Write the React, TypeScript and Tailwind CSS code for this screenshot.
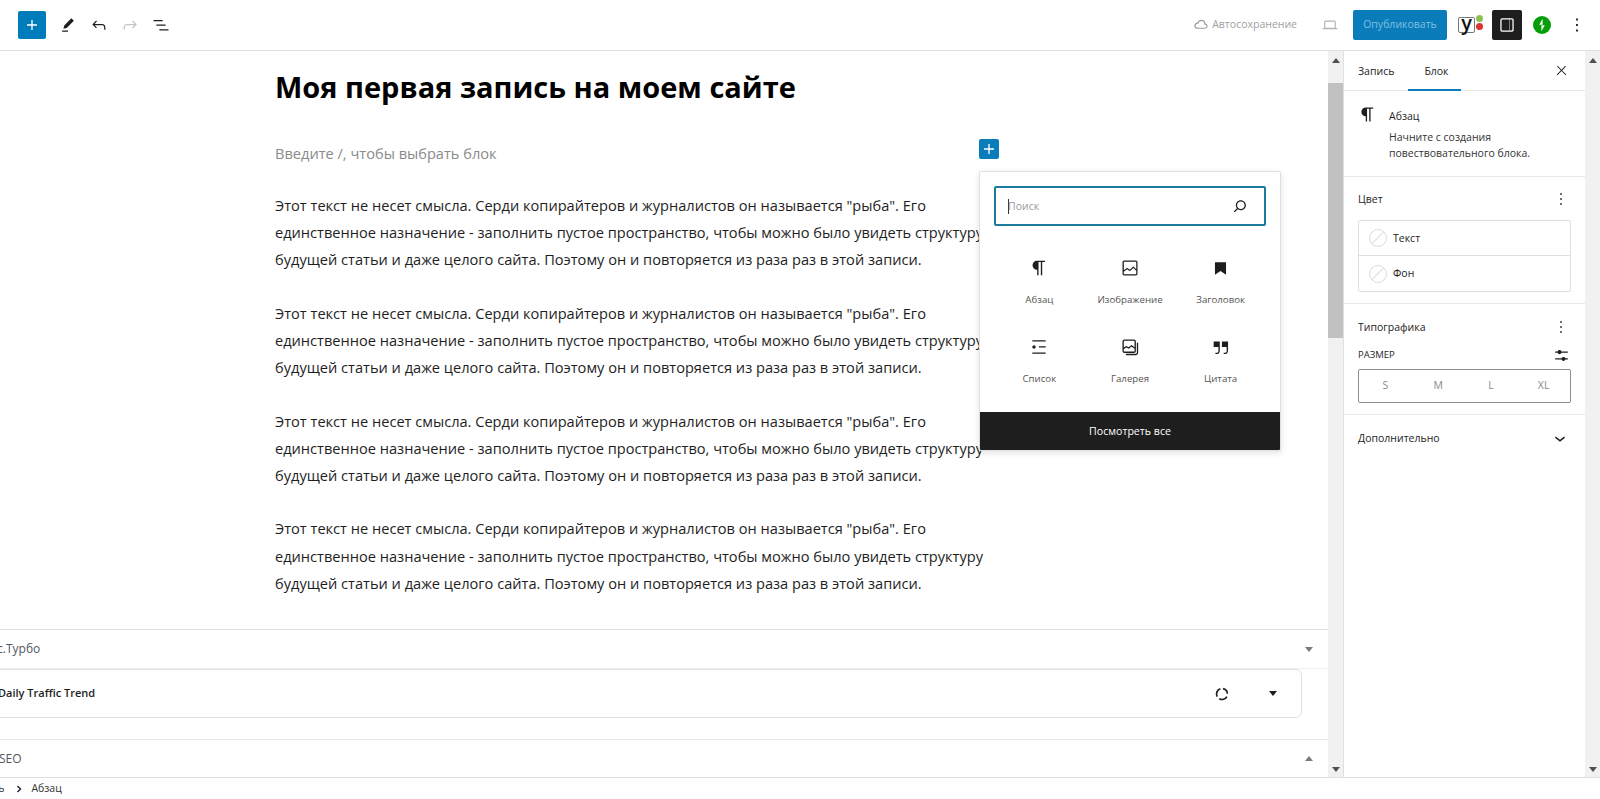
import React from "react";

const P = {
  plus: "M18 11.2h-5.2V6h-1.6v5.2H6v1.6h5.2V18h1.6v-5.2H18z",
  pencil: "m19 7-3-3-8.5 8.5-1 4 4-1L19 7Zm-7 11.5H5V20h7v-1.5Z",
  undo: "M18.3 11.7c-.6-.6-1.4-.9-2.3-.9H6.7l2.9-3.3-1.1-1-4.5 5L8.5 16l1-1-2.7-2.7H16c.5 0 .9.2 1.3.5 1 1 1 3.4 1 4.5v.3h1.5v-.2c0-1.5 0-4.3-1.5-5.7z",
  redo: "M15.6 6.5l-1.1 1 2.9 3.3H8c-.9 0-1.7.3-2.3.9-1.4 1.5-1.4 4.2-1.4 5.6v.2h1.5v-.3c0-1.1 0-3.5 1-4.5.3-.3.7-.5 1.3-.5h9.2L14.5 15l1.1 1.1 4.6-4.6-4.6-5z",
  listView: "M3 6h11v1.5H3V6Zm3.5 5.5h11V13h-11v-1.5ZM21 17H10v1.5h11V17Z",
  paragraph: "m9.99609 14v-.2251l.00391.0001v6.225h1.5v-14.5h2.5v14.5h1.5v-14.5h3v-1.5h-8.50391c-2.76142 0-5 2.23858-5 5 0 2.7614 2.23858 5 5 5z",
  image: "M19 3H5c-1.1 0-2 .9-2 2v14c0 1.1.9 2 2 2h14c1.1 0 2-.9 2-2V5c0-1.1-.9-2-2-2zM5 4.5h14c.3 0 .5.2.5.5v8.4l-3-2.9c-.3-.3-.8-.3-1 0L11.9 14 9 12c-.3-.2-.6-.2-.8 0l-3.6 2.6V5c-.1-.3.1-.5.4-.5zm14 15H5c-.3 0-.5-.2-.5-.5v-2.4l4.1-3 3 1.9c.3.2.7.2.9-.1L16 12l3.5 3.4V19c0 .3-.2.5-.5.5z",
  bookmark: "M5 4h14v16l-7-5-7 5z",
  list: "M4 4v1.5h16V4H4zm8 8.5h8V11h-8v1.5zM4 20h16v-1.5H4V20zm4-8c0-1.1-.9-2-2-2s-2 .9-2 2 .9 2 2 2 2-.9 2-2z",
  quote: "M13 6v6h5.2v4c0 .8-.2 1.4-.5 1.7-.6.6-1.6.6-2.5.5h-.3v1.5h.5c1 0 2.3-.1 3.3-1 .6-.6 1-1.6 1-2.8V6H13zm-9 6h5.2v4c0 .8-.2 1.4-.5 1.7-.6.6-1.6.6-2.5.5h-.3v1.5h.5c1 0 2.3-.1 3.3-1 .6-.6 1-1.6 1-2.8V6H4v6z",
  search: "M13 5c-3.3 0-6 2.7-6 6 0 1.4.5 2.7 1.3 3.7l-3.8 3.8 1.1 1.1 3.8-3.8c1 .8 2.3 1.3 3.7 1.3 3.3 0 6-2.7 6-6S16.3 5 13 5zm0 10.5c-2.5 0-4.5-2-4.5-4.5s2-4.5 4.5-4.5 4.5 2 4.5 4.5-2 4.5-4.5 4.5z",
  more: "M13 19h-2v-2h2v2zm0-6h-2v-2h2v2zm0-6h-2V5h2v2z",
  close: "m13 11.8 6.1-6.3-1-1-6.1 6.2-6.1-6.3-1 1 6.1 6.3-6.5 6.7 1 1 6.5-6.6 6.5 6.6 1-1z",
  chevron: "M17.5 11.6L12 16l-5.5-4.4.9-1.2L12 14l4.5-3.6 1 1.2z",
  sliders: "M14.5 13.8c-1.1 0-2.1.7-2.4 1.8H4V17h8.1c.3 1 1.3 1.8 2.4 1.8s2.1-.7 2.4-1.8H20v-1.5h-3.1c-.3-1-1.3-1.7-2.4-1.7zM11.9 7c-.3-1-1.3-1.8-2.4-1.8S7.4 6 7.1 7H4v1.5h3.1c.3 1 1.3 1.8 2.4 1.8s2.1-.7 2.4-1.8H20V7h-8.1z",
  drawer: "M18 4H6c-1.1 0-2 .9-2 2v12c0 1.1.9 2 2 2h12c1.1 0 2-.9 2-2V6c0-1.1-.9-2-2-2zm-4 14.5H6c-.3 0-.5-.2-.5-.5V6c0-.3.2-.5.5-.5h8.5v13zm4-.5c0 .3-.2.5-.5.5h-2.5v-13H18c.3 0 .5.2.5.5v12z",
  desktop: "M20.5 16h-.7V8c0-1.1-.9-2-2-2H6.2c-1.1 0-2 .9-2 2v8h-.7c-.8 0-1.5.7-1.5 1.5h20c0-.8-.7-1.5-1.5-1.5zM5.7 8c0-.3.2-.5.5-.5h11.6c.3 0 .5.2.5.5v7.6H5.7V8z",
  cloud: "M17.3 10.1c0-2.5-2.1-4.4-4.8-4.4-2.2 0-4.1 1.4-4.6 3.3h-.2C5.7 9 4 10.7 4 12.8c0 2.1 1.7 3.8 3.7 3.8h9c1.8 0 3.2-1.5 3.2-3.3.1-1.6-1.1-2.9-2.6-3.2zm-.5 5.1h-9c-1.2 0-2.2-1.1-2.2-2.3s1-2.4 2.2-2.4h1.3l.3-1.1c.4-1.3 1.7-2.2 3.2-2.2 1.8 0 3.3 1.3 3.3 2.9v1.3l1.3.2c.8.1 1.4.9 1.4 1.8-.1 1-.9 1.8-1.8 1.8z",
};

function Icon({ d, size = 20, className = "" }: { d: string; size?: number; className?: string }) {
  return (
    <svg width={size} height={size} viewBox="0 0 24 24" fill="currentColor" className={`shrink-0 ${className}`}>
      <path d={d} />
    </svg>
  );
}

function Gallery() {
  return (
    <svg width="20" height="20" viewBox="0 0 24 24" fill="none" stroke="currentColor" strokeWidth="1.6" className="shrink-0">
      <rect x="3.75" y="3.75" width="14.5" height="14.5" rx="1.5" />
      <path d="M4 14l3.5-2.4 3 1.6 3.4-2.6 4 3" />
      <path d="M21 7v12a2 2 0 0 1-2 2H7" />
    </svg>
  );
}

function Spinner() {
  return (
    <svg width="14" height="14" viewBox="0 0 14 14" fill="none" stroke="#1e1e1e" strokeWidth="1.7" className="shrink-0">
      <path d="M2.2 9.6A5.4 5.4 0 0 1 5.4 1.8" />
      <path d="M8 1.7a5.4 5.4 0 0 1 4.4 5" />
      <path d="M11.9 9.6a5.4 5.4 0 0 1-7.6 2.1" />
    </svg>
  );
}

function Tri({ up = false, className = "" }: { up?: boolean; className?: string }) {
  return (
    <span
      className={`block w-0 h-0 border-l-[4px] border-r-[4px] border-l-transparent border-r-transparent ${
        up ? "border-b-[5px] border-b-current" : "border-t-[5px] border-t-current"
      } ${className}`}
    />
  );
}

function Scrollbar({ thumb = false }: { thumb?: boolean }) {
  return (
    <div className="w-[15px] shrink-0 bg-[#f1f1f1] flex flex-col items-center text-[#505050]">
      <div className="h-[15px] w-full flex items-center justify-center pt-[3px]">
        <Tri up />
      </div>
      {thumb && <div className="mt-[17px] h-[255px] w-full bg-[#c1c1c1]" />}
      <div className="mt-auto h-[15px] w-full flex items-center justify-center">
        <Tri />
      </div>
    </div>
  );
}

const BODY =
  'Этот текст не несет смысла. Серди копирайтеров и журналистов он называется "рыба". Его единственное назначение - заполнить пустое пространство, чтобы можно было увидеть структуру будущей статьи и даже целого сайта. Поэтому он и повторяется из раза раз в этой записи.';

const BLOCKS = [
  { label: "Абзац", icon: <Icon d={P.paragraph} size={22} /> },
  { label: "Изображение", icon: <Icon d={P.image} /> },
  { label: "Заголовок", icon: <Icon d={P.bookmark} size={19} /> },
  { label: "Список", icon: <Icon d={P.list} /> },
  { label: "Галерея", icon: <Gallery /> },
  { label: "Цитата", icon: <Icon d={P.quote} size={22} /> },
];

function NoColor() {
  return (
    <span className="relative w-[18px] h-[18px] rounded-full border border-[#dcdcdc] overflow-hidden shrink-0">
      <span className="absolute left-[-2px] top-[7px] w-[20px] h-px bg-[#dcdcdc] -rotate-45" />
    </span>
  );
}

export default function App() {
  return (
    <div className="w-[1600px] h-[799px] flex flex-col overflow-hidden bg-white text-[#1e1e1e] font-['Open_Sans','Noto_Sans',sans-serif]">
      {/* Top toolbar */}
      <header className="h-[51px] shrink-0 border-b border-[#e0e0e0] flex items-center pl-[18px]">
        <button className="w-[28px] h-[28px] rounded-[2px] bg-[#007cba] text-white flex items-center justify-center">
          <Icon d={P.plus} />
        </button>
        <div className="ml-[12px] flex items-center gap-[11px]">
          <Icon d={P.pencil} />
          <Icon d={P.undo} />
          <Icon d={P.redo} className="text-[#c4c4c4]" />
          <Icon d={P.listView} />
        </div>
        <div className="ml-auto flex items-center text-[10.5px] text-[#a0a0a0]">
          <Icon d={P.cloud} size={20} className="text-[#9a9a9a]" />
          <span className="ml-[1px]">Автосохранение</span>
        </div>
        <Icon d={P.desktop} size={18} className="ml-[24px] text-[#b4b4b4]" />
        <button className="ml-[14px] w-[94px] h-[30px] rounded-[2px] bg-[#0a7cba] text-[#7fbfe2] text-[10.5px] flex items-center justify-center">
          Опубликовать
        </button>
        <div className="ml-[11px] w-[25px] h-[24px] flex items-center relative">
          <span className="w-[17px] h-[16px] border border-[#777] rounded-[2px] flex items-center justify-center text-[20px] font-semibold leading-none text-[#111] pb-[5px]">
            y
          </span>
          <span className="absolute right-0 top-[2px] w-[7px] h-[7px] rounded-full bg-[#8cc152]" />
          <span className="absolute right-0 top-[10px] w-[7px] h-[7px] rounded-full bg-[#dc3232]" />
        </div>
        <button className="ml-[9px] w-[30px] h-[30px] rounded-[2px] bg-[#1e1e1e] text-white flex items-center justify-center">
          <Icon d={P.drawer} size={20} />
        </button>
        <svg width="18" height="18" viewBox="0 0 18 18" className="ml-[11px] shrink-0">
          <circle cx="9" cy="9" r="9" fill="#069e08" />
          <path d="M9.6 2.8v6H6.2zM8.4 15.2v-6h3.4z" fill="#fff" />
        </svg>
        <Icon d={P.more} size={22} className="ml-[15px] mr-[12px]" />
      </header>

      <div className="flex-1 min-h-0 flex">
        {/* Editor column */}
        <main className="flex-1 min-w-0 flex">
          <div className="relative flex-1 min-w-0 flex flex-col overflow-hidden">
            <section className="h-[578px] shrink-0 pl-[275px]">
              <h1 className="mt-[16px] text-[29px] leading-[40px] font-bold text-black">Моя первая запись на моем сайте</h1>
              <p className="mt-[33px] text-[14.6px] leading-[27px] text-[#8a8a8a]">Введите /, чтобы выбрать блок</p>
              <div className="mt-[25px] w-[712px] flex flex-col gap-[26.2px]">
                {[0, 1, 2, 3].map((i) => (
                  <p key={i} className="text-[14.6px] leading-[27.2px]">
                    {BODY}
                  </p>
                ))}
              </div>
            </section>

            {/* Meta boxes, scrolled slightly sideways */}
            <section className="flex-1 border-t border-[#e0e0e0] text-[12px] overflow-hidden">
              <div className="h-[39px] border-b border-[#f0f0f0] flex items-center justify-between pr-[15px] font-medium text-[#50575e] -ml-[38px]">
                <span>Яндекс.Турбо</span>
                <Tri className="text-[#787c82]" />
              </div>
              <div className="h-[49px] mr-[26px] -ml-[20px] pl-[17px] border border-[#e0e0e0] rounded-[6px] flex items-center font-semibold text-[11px]">
                <span>Daily Traffic Trend</span>
                <span className="ml-auto mr-[24px] flex items-center gap-[40px]">
                  <Spinner />
                  <Tri className="text-[#1e1e1e]" />
                </span>
              </div>
              <div className="mt-[21px] h-[38px] border-t border-[#e8e8e8] flex items-center justify-between pr-[15px] font-medium text-[#50575e] text-[12px]">
                <span className="-ml-[1px]">SEO</span>
                <Tri up className="text-[#787c82]" />
              </div>
            </section>

            {/* Block inserter */}
            <button className="absolute left-[979px] top-[88px] w-[20px] h-[20px] rounded-[2px] bg-[#0a7cba] text-white flex items-center justify-center">
              <Icon d={P.plus} size={20} />
            </button>
            <div className="absolute left-[979px] top-[120px] w-[302px] h-[280px] bg-white border border-[#e0e0e0] rounded-[2px] shadow-[0_2px_6px_rgba(0,0,0,0.12)] flex flex-col overflow-hidden">
              <div className="mt-[14px] mx-[14px] h-[40px] shrink-0 border-2 border-[#1c7a9c] rounded-[2px] flex items-center pl-[12px] pr-[14px] text-[10.5px] text-[#9a9a9a]">
                <span className="w-px h-[15px] bg-[#333]" />
                <span className="-ml-[1px] pt-[2px]">Поиск</span>
                <Icon d={P.search} size={20} className="ml-auto text-[#1e1e1e]" />
              </div>
              <div className="mt-[31px] mx-[14px] grid grid-cols-3 gap-y-[29px]">
                {BLOCKS.map((b) => (
                  <div key={b.label} className="flex flex-col items-center">
                    <div className="h-[22px] flex items-center justify-center">{b.icon}</div>
                    <span className="mt-[14px] text-[9.7px] leading-[14px] text-[#555]">{b.label}</span>
                  </div>
                ))}
              </div>
              <div className="mt-auto h-[38px] shrink-0 bg-[#1e1e1e] text-white text-[10.6px] font-medium flex items-center justify-center pt-[2px]">
                Посмотреть все
              </div>
            </div>
          </div>
          <Scrollbar thumb />
        </main>

        {/* Settings sidebar */}
        <aside className="w-[257px] shrink-0 flex border-l border-[#e0e0e0]">
          <div className="w-[241px] shrink-0 flex flex-col text-[10.5px]">
            <div className="h-[40px] border-b border-[#e8e8e8] flex items-center pl-[14px] pr-[16px] relative">
              <span className="pt-[2px]">Запись</span>
              <span className="ml-[30px] pt-[2px]">Блок</span>
              <span className="absolute left-[64px] bottom-[-1px] w-[53px] h-[2px] bg-[#0a7cba]" />
              <Icon d={P.close} size={15} className="ml-auto" />
            </div>
            <div className="h-[86px] border-b border-[#e8e8e8] pt-[14px] pl-[13px] flex gap-[11px]">
              <Icon d={P.paragraph} size={21} className="-mt-[1px]" />
              <div className="pt-[3px]">
                <div className="leading-[16px]">Абзац</div>
                <div className="mt-[5px] leading-[16px] text-[#333]">
                  Начните с создания
                  <br />
                  повествовательного блока.
                </div>
              </div>
            </div>
            <div className="h-[127px] border-b border-[#e8e8e8] px-[14px]">
              <div className="h-[43px] flex items-center justify-between">
                <span className="pt-[2px]">Цвет</span>
                <Icon d={P.more} size={20} />
              </div>
              <div className="border border-[#e0e0e0] rounded-[2px] flex flex-col">
                <div className="h-[35px] border-b border-[#e0e0e0] flex items-center gap-[6px] pl-[10px]">
                  <NoColor />
                  <span className="pt-[2px]">Текст</span>
                </div>
                <div className="h-[35px] flex items-center gap-[6px] pl-[10px]">
                  <NoColor />
                  <span className="pt-[1px]">Фон</span>
                </div>
              </div>
            </div>
            <div className="h-[111px] border-b border-[#e8e8e8] px-[14px]">
              <div className="h-[46px] flex items-center justify-between font-medium">
                <span className="pt-[1px]">Типографика</span>
                <Icon d={P.more} size={20} />
              </div>
              <div className="h-[18px] -mt-[4px] flex items-center justify-between text-[9.5px]">
                <span>РАЗМЕР</span>
                <Icon d={P.sliders} size={19} />
              </div>
              <div className="mt-[5px] h-[34px] border border-[#8c8f94] rounded-[2px] grid grid-cols-4 items-center text-center text-[10.5px] text-[#8a8a8a]">
                <span>S</span>
                <span>M</span>
                <span>L</span>
                <span>XL</span>
              </div>
            </div>
            <div className="h-[46px] px-[14px] flex items-center justify-between font-medium">
              <span className="pt-[1px]">Дополнительно</span>
              <Icon d={P.chevron} size={22} />
            </div>
          </div>
          <Scrollbar />
        </aside>
      </div>

      {/* Block breadcrumb */}
      <footer className="h-[22px] shrink-0 border-t border-[#e0e0e0] flex items-center text-[10.5px] text-[#333]">
        <span className="-ml-[32px]">Запись</span>
        <svg width="8" height="8" viewBox="0 0 8 8" fill="none" stroke="#1e1e1e" strokeWidth="1.4" className="ml-[11px]">
          <path d="M2.5 1l3 3-3 3" />
        </svg>
        <span className="ml-[8px]">Абзац</span>
      </footer>
    </div>
  );
}
